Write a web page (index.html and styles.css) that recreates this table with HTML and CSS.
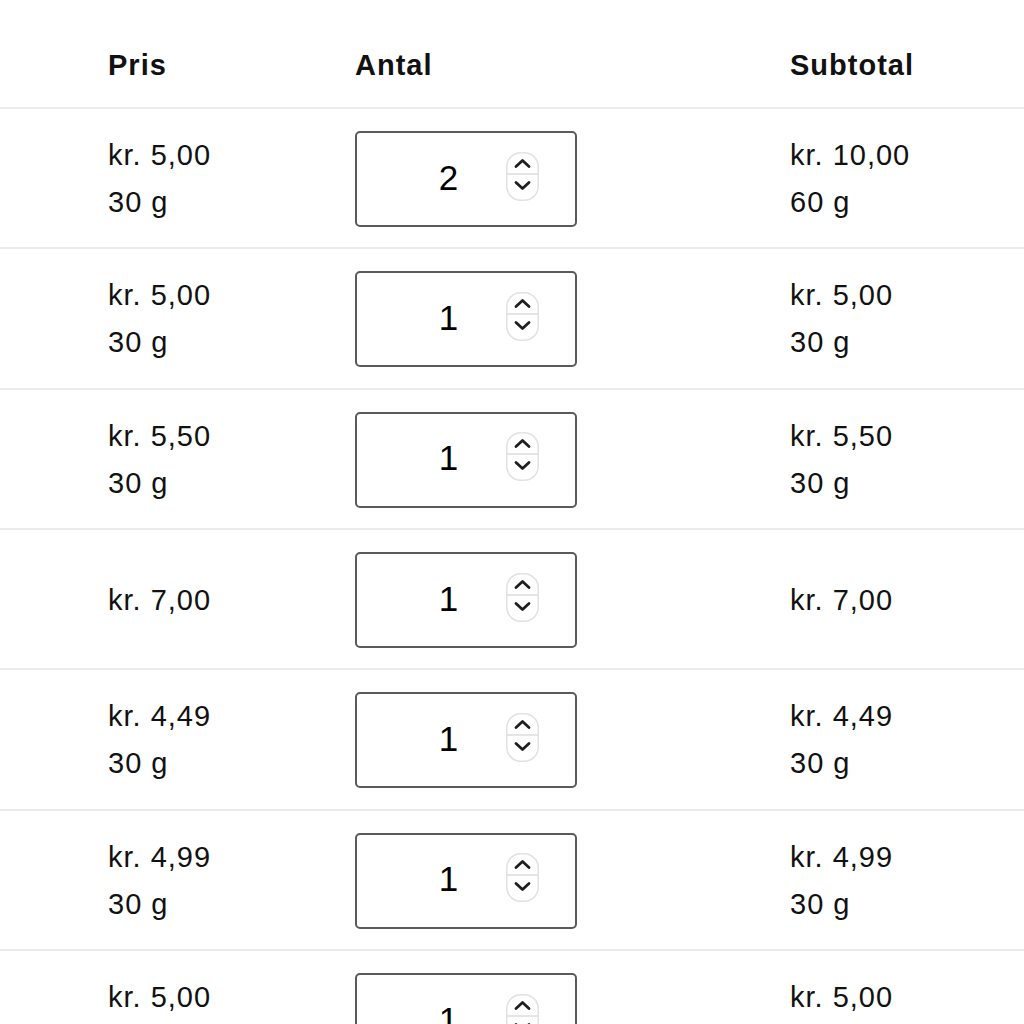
FILE: index.html
```html
<!DOCTYPE html>
<html lang="da">
<head>
<meta charset="utf-8">
<title>Kurv</title>
<link rel="stylesheet" href="styles.css">
</head>
<body>
<div class="cart">
  <div class="row head">
    <div class="cell">Pris</div>
    <div class="cell">Antal</div>
    <div class="cell">Subtotal</div>
  </div>

  <div class="row item">
    <div class="cell"><div>kr. 5,00</div><div>30 g</div></div>
    <div class="cell"><div class="qty"><span class="num">2</span><span class="spin"><svg viewBox="0 0 33 49" width="33" height="49"><rect x="0.75" y="0.75" width="31.5" height="47.5" rx="14" fill="#fff" stroke="#e2e2e2" stroke-width="1.5"/><line x1="1" y1="22" x2="32" y2="22" stroke="#dcdcdc" stroke-width="1.5"/><polyline points="10,14.5 16.5,8.5 23,14.5" fill="none" stroke="#1e1e1e" stroke-width="2.8" stroke-linecap="round" stroke-linejoin="round"/><polyline points="10,30.5 16.5,36.5 23,30.5" fill="none" stroke="#1e1e1e" stroke-width="2.8" stroke-linecap="round" stroke-linejoin="round"/></svg></span></div></div>
    <div class="cell"><div>kr. 10,00</div><div>60 g</div></div>
  </div>

  <div class="row item">
    <div class="cell"><div>kr. 5,00</div><div>30 g</div></div>
    <div class="cell"><div class="qty"><span class="num">1</span><span class="spin"><svg viewBox="0 0 33 49" width="33" height="49"><rect x="0.75" y="0.75" width="31.5" height="47.5" rx="14" fill="#fff" stroke="#e2e2e2" stroke-width="1.5"/><line x1="1" y1="22" x2="32" y2="22" stroke="#dcdcdc" stroke-width="1.5"/><polyline points="10,14.5 16.5,8.5 23,14.5" fill="none" stroke="#1e1e1e" stroke-width="2.8" stroke-linecap="round" stroke-linejoin="round"/><polyline points="10,30.5 16.5,36.5 23,30.5" fill="none" stroke="#1e1e1e" stroke-width="2.8" stroke-linecap="round" stroke-linejoin="round"/></svg></span></div></div>
    <div class="cell"><div>kr. 5,00</div><div>30 g</div></div>
  </div>

  <div class="row item">
    <div class="cell"><div>kr. 5,50</div><div>30 g</div></div>
    <div class="cell"><div class="qty"><span class="num">1</span><span class="spin"><svg viewBox="0 0 33 49" width="33" height="49"><rect x="0.75" y="0.75" width="31.5" height="47.5" rx="14" fill="#fff" stroke="#e2e2e2" stroke-width="1.5"/><line x1="1" y1="22" x2="32" y2="22" stroke="#dcdcdc" stroke-width="1.5"/><polyline points="10,14.5 16.5,8.5 23,14.5" fill="none" stroke="#1e1e1e" stroke-width="2.8" stroke-linecap="round" stroke-linejoin="round"/><polyline points="10,30.5 16.5,36.5 23,30.5" fill="none" stroke="#1e1e1e" stroke-width="2.8" stroke-linecap="round" stroke-linejoin="round"/></svg></span></div></div>
    <div class="cell"><div>kr. 5,50</div><div>30 g</div></div>
  </div>

  <div class="row item">
    <div class="cell"><div>kr. 7,00</div></div>
    <div class="cell"><div class="qty"><span class="num">1</span><span class="spin"><svg viewBox="0 0 33 49" width="33" height="49"><rect x="0.75" y="0.75" width="31.5" height="47.5" rx="14" fill="#fff" stroke="#e2e2e2" stroke-width="1.5"/><line x1="1" y1="22" x2="32" y2="22" stroke="#dcdcdc" stroke-width="1.5"/><polyline points="10,14.5 16.5,8.5 23,14.5" fill="none" stroke="#1e1e1e" stroke-width="2.8" stroke-linecap="round" stroke-linejoin="round"/><polyline points="10,30.5 16.5,36.5 23,30.5" fill="none" stroke="#1e1e1e" stroke-width="2.8" stroke-linecap="round" stroke-linejoin="round"/></svg></span></div></div>
    <div class="cell"><div>kr. 7,00</div></div>
  </div>

  <div class="row item">
    <div class="cell"><div>kr. 4,49</div><div>30 g</div></div>
    <div class="cell"><div class="qty"><span class="num">1</span><span class="spin"><svg viewBox="0 0 33 49" width="33" height="49"><rect x="0.75" y="0.75" width="31.5" height="47.5" rx="14" fill="#fff" stroke="#e2e2e2" stroke-width="1.5"/><line x1="1" y1="22" x2="32" y2="22" stroke="#dcdcdc" stroke-width="1.5"/><polyline points="10,14.5 16.5,8.5 23,14.5" fill="none" stroke="#1e1e1e" stroke-width="2.8" stroke-linecap="round" stroke-linejoin="round"/><polyline points="10,30.5 16.5,36.5 23,30.5" fill="none" stroke="#1e1e1e" stroke-width="2.8" stroke-linecap="round" stroke-linejoin="round"/></svg></span></div></div>
    <div class="cell"><div>kr. 4,49</div><div>30 g</div></div>
  </div>

  <div class="row item">
    <div class="cell"><div>kr. 4,99</div><div>30 g</div></div>
    <div class="cell"><div class="qty"><span class="num">1</span><span class="spin"><svg viewBox="0 0 33 49" width="33" height="49"><rect x="0.75" y="0.75" width="31.5" height="47.5" rx="14" fill="#fff" stroke="#e2e2e2" stroke-width="1.5"/><line x1="1" y1="22" x2="32" y2="22" stroke="#dcdcdc" stroke-width="1.5"/><polyline points="10,14.5 16.5,8.5 23,14.5" fill="none" stroke="#1e1e1e" stroke-width="2.8" stroke-linecap="round" stroke-linejoin="round"/><polyline points="10,30.5 16.5,36.5 23,30.5" fill="none" stroke="#1e1e1e" stroke-width="2.8" stroke-linecap="round" stroke-linejoin="round"/></svg></span></div></div>
    <div class="cell"><div>kr. 4,99</div><div>30 g</div></div>
  </div>

  <div class="row item">
    <div class="cell"><div>kr. 5,00</div><div>30 g</div></div>
    <div class="cell"><div class="qty"><span class="num">1</span><span class="spin"><svg viewBox="0 0 33 49" width="33" height="49"><rect x="0.75" y="0.75" width="31.5" height="47.5" rx="14" fill="#fff" stroke="#e2e2e2" stroke-width="1.5"/><line x1="1" y1="22" x2="32" y2="22" stroke="#dcdcdc" stroke-width="1.5"/><polyline points="10,14.5 16.5,8.5 23,14.5" fill="none" stroke="#1e1e1e" stroke-width="2.8" stroke-linecap="round" stroke-linejoin="round"/><polyline points="10,30.5 16.5,36.5 23,30.5" fill="none" stroke="#1e1e1e" stroke-width="2.8" stroke-linecap="round" stroke-linejoin="round"/></svg></span></div></div>
    <div class="cell"><div>kr. 5,00</div><div>30 g</div></div>
  </div>
</div>
</body>
</html>
```

FILE: styles.css
```css
html, body {
  margin: 0;
  padding: 0;
  background: #fff;
  height: 1024px;
  overflow: hidden;
}

body {
  font-family: "Liberation Sans", Arial, Helvetica, sans-serif;
  color: #111;
}

.cart {
  display: flex;
  flex-direction: column;
}

.row {
  display: grid;
  grid-template-columns: 247px 435px 1fr;
  padding-left: 108px;
  box-sizing: border-box;
  border-bottom: 2px solid #ebebeb;
  flex-shrink: 0;
}

.head {
  height: 109px;
  padding-top: 45px;
  font-weight: bold;
  font-size: 29px;
  line-height: 40px;
  letter-spacing: 1px;
}

.item {
  height: 140.33px;
  padding-top: 2px;
  align-items: center;
  font-size: 29px;
  line-height: 47px;
  letter-spacing: 1px;
}

.item .cell {
  display: flex;
  flex-direction: column;
  justify-content: center;
}

.qty {
  width: 222px;
  height: 96px;
  box-sizing: border-box;
  border: 2px solid #5a5a5a;
  border-radius: 5px;
  display: flex;
  align-items: center;
  padding-left: 34px;
}

.num {
  flex: 1;
  text-align: center;
  font-size: 35px;
  letter-spacing: 0;
  color: #000;
  padding-bottom: 4px;
}

.spin {
  display: flex;
  width: 33px;
  height: 49px;
  margin-right: 36px;
  margin-top: -6px;
}
```
